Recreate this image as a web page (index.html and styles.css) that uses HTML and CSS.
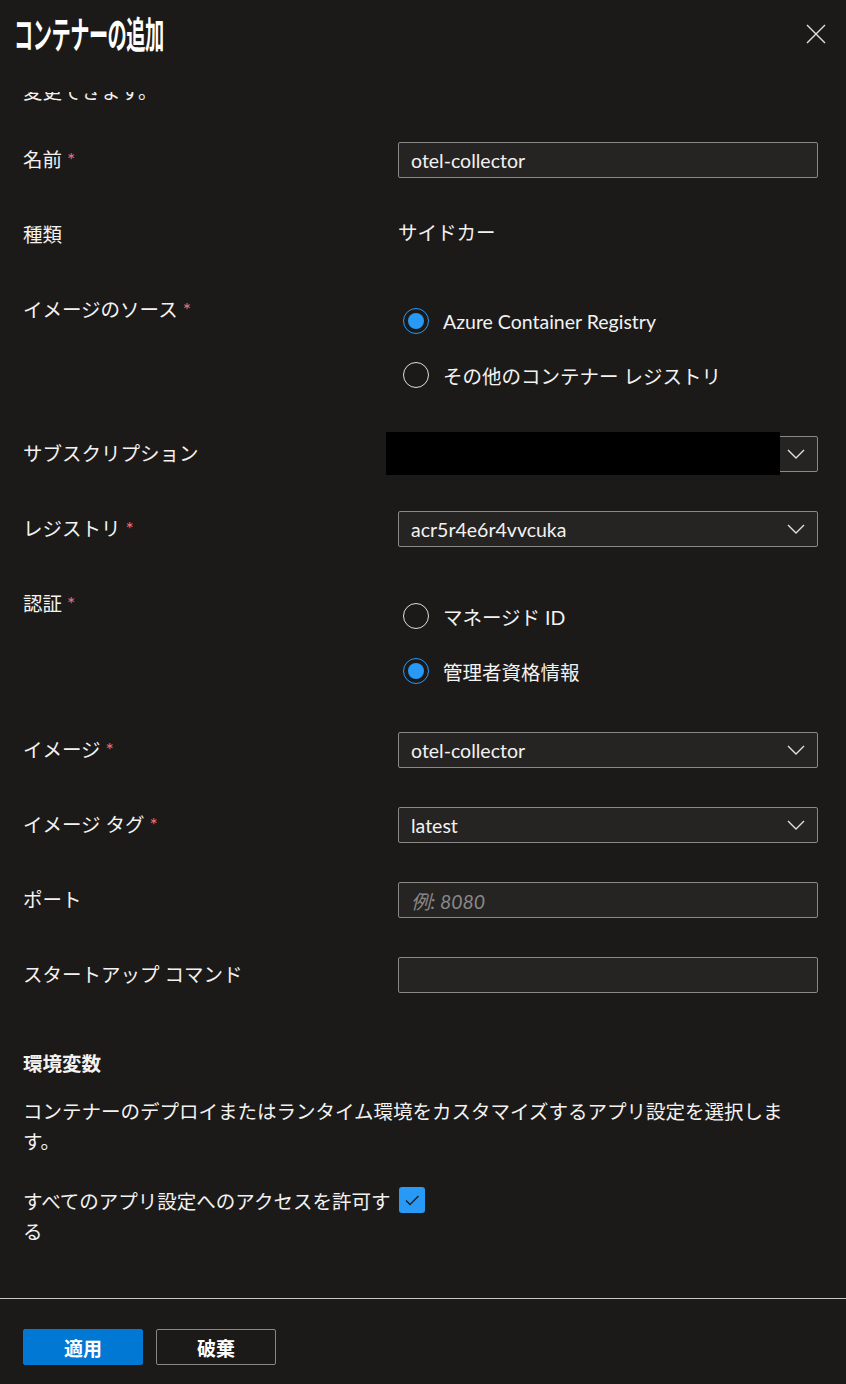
FILE: index.html
```html
<!DOCTYPE html>
<html lang="ja">
<head>
    <meta charset="UTF-8">
    <meta name="viewport" content="width=device-width, initial-scale=1.0">
    <title>コンテナーの追加</title>
    <link rel="stylesheet" href="styles.css">
</head>
<body>
    <div class="panel">
        <header class="panel-head">
            <h1 class="title">コンテナーの追加</h1>
            <button class="close" aria-label="閉じる">
                <svg width="20" height="20" viewBox="0 0 20 20"><path d="M1 1 L19 19 M19 1 L1 19" stroke="#e1dfdd" stroke-width="1.4" fill="none"/></svg>
            </button>
        </header>

        <main class="panel-body">
            <p class="intro">変更できます。</p>

            <div class="row">
                <label class="label">名前 <span class="req">*</span></label>
                <div class="field"><span class="value">otel-collector</span></div>
            </div>

            <div class="row">
                <label class="label">種類</label>
                <div class="plain">サイドカー</div>
            </div>

            <div class="row row-top">
                <label class="label">イメージのソース <span class="req">*</span></label>
                <div class="radios">
                    <div class="radio-item"><span class="radio checked"></span>Azure Container Registry</div>
                    <div class="radio-item"><span class="radio"></span>その他のコンテナー レジストリ</div>
                </div>
            </div>

            <div class="row">
                <label class="label">サブスクリプション</label>
                <div class="field dropdown redact-wrap">
                    <span class="value"></span>
                    <svg class="chev" width="18" height="10" viewBox="0 0 18 10"><path d="M1 1 L9 9 L17 1" stroke="#e1dfdd" stroke-width="1.4" fill="none"/></svg>
                    <div class="redacted"></div>
                </div>
            </div>

            <div class="row">
                <label class="label">レジストリ <span class="req">*</span></label>
                <div class="field dropdown">
                    <span class="value">acr5r4e6r4vvcuka</span>
                    <svg class="chev" width="18" height="10" viewBox="0 0 18 10"><path d="M1 1 L9 9 L17 1" stroke="#e1dfdd" stroke-width="1.4" fill="none"/></svg>
                </div>
            </div>

            <div class="row row-top">
                <label class="label">認証 <span class="req">*</span></label>
                <div class="radios auth">
                    <div class="radio-item"><span class="radio"></span>マネージド ID</div>
                    <div class="radio-item"><span class="radio checked"></span>管理者資格情報</div>
                </div>
            </div>

            <div class="row">
                <label class="label">イメージ <span class="req">*</span></label>
                <div class="field dropdown">
                    <span class="value">otel-collector</span>
                    <svg class="chev" width="18" height="10" viewBox="0 0 18 10"><path d="M1 1 L9 9 L17 1" stroke="#e1dfdd" stroke-width="1.4" fill="none"/></svg>
                </div>
            </div>

            <div class="row">
                <label class="label">イメージ タグ <span class="req">*</span></label>
                <div class="field dropdown">
                    <span class="value">latest</span>
                    <svg class="chev" width="18" height="10" viewBox="0 0 18 10"><path d="M1 1 L9 9 L17 1" stroke="#e1dfdd" stroke-width="1.4" fill="none"/></svg>
                </div>
            </div>

            <div class="row">
                <label class="label">ポート</label>
                <div class="field"><span class="placeholder">例: 8080</span></div>
            </div>

            <div class="row last">
                <label class="label">スタートアップ コマンド</label>
                <div class="field"></div>
            </div>

            <section class="env">
                <h2 class="env-title">環境変数</h2>
                <p class="env-desc">コンテナーのデプロイまたはランタイム環境をカスタマイズするアプリ設定を選択します。</p>
                <div class="row row-top check-row">
                    <label class="label wrap">すべてのアプリ設定へのアクセスを許可する</label>
                    <div>
                        <span class="checkbox">
                            <svg width="26" height="26" viewBox="0 0 26 26"><path d="M7 13.5 L11 17.5 L19.5 9" stroke="#1b1a19" stroke-width="1.3" fill="none"/></svg>
                        </span>
                    </div>
                </div>
            </section>
        </main>

        <footer class="panel-foot">
            <button class="btn primary">適用</button>
            <button class="btn">破棄</button>
        </footer>
    </div>
</body>
</html>
```

FILE: styles.css
```css
/* パネル全体 */
html, body {
    margin: 0;
    height: 100%;
}

body {
    background: #1b1a19;
    color: #f3f2f1;
    font-family: "Segoe UI", Lato, "Noto Sans CJK JP", sans-serif;
    font-size: 19.5px;
}

.panel {
    height: 100vh;
    display: flex;
    flex-direction: column;
}

.panel-head {
    height: 92px;
    flex: none;
    display: flex;
    justify-content: space-between;
    align-items: flex-start;
    padding: 0 20px 0 14px;
}

.title {
    margin: 12px 0 0;
    font-family: "Noto Sans CJK JP", sans-serif;
    font-size: 37px;
    font-weight: 700;
    line-height: 42px;
    letter-spacing: -1px;
    color: #ffffff;
    transform: scaleX(0.52);
    transform-origin: left center;
    white-space: nowrap;
}

.close {
    margin-top: 24px;
    background: none;
    border: none;
    padding: 0;
    cursor: pointer;
}

.panel-body {
    flex: 1;
    overflow: hidden;
    padding: 0 23px;
}

.intro {
    margin: -15px 0 35px;
    line-height: 30px;
}

/* フォーム行 */
.row {
    display: grid;
    grid-template-columns: 375px 420px;
    align-items: center;
    margin-bottom: 39px;
}

.row.row-top {
    align-items: start;
}

.row.last {
    margin-bottom: 0;
}

.label {
    line-height: 36px;
    white-space: nowrap;
}

.label.wrap {
    white-space: normal;
    line-height: 30px;
}

.req {
    color: #f1707b;
}

.field {
    position: relative;
    height: 36px;
    box-sizing: border-box;
    border: 1px solid #8a8886;
    border-radius: 2px;
    background: #252423;
    display: flex;
    align-items: center;
    padding: 0 12px;
}

.dropdown {
    justify-content: space-between;
}

.value {
    color: #f3f2f1;
}

.placeholder {
    color: #8a8886;
    font-style: italic;
}

.plain {
    line-height: 36px;
    margin-top: -4px;
}

.redacted {
    position: absolute;
    left: -13px;
    top: -5px;
    width: 394px;
    height: 43px;
    background: #000000;
}

/* ラジオボタン */
.radios {
    display: flex;
    flex-direction: column;
    gap: 18px;
    padding: 11px 0 4px 5px;
}

.radios.auth {
    gap: 19px;
    padding-top: 12px;
}

.radio-item {
    display: flex;
    align-items: center;
    gap: 14px;
    height: 36px;
}

.radio {
    width: 26px;
    height: 26px;
    box-sizing: border-box;
    border: 1.5px solid #e1dfdd;
    border-radius: 50%;
    display: flex;
    align-items: center;
    justify-content: center;
}

.radio.checked {
    border-color: #2899f5;
}

.radio.checked::after {
    content: "";
    width: 16px;
    height: 16px;
    border-radius: 50%;
    background: #2899f5;
}

/* 環境変数 */
.env {
    padding-top: 56px;
}

.env-title {
    margin: 0;
    font-size: 19.5px;
    font-weight: 700;
    line-height: 30px;
}

.env-desc {
    margin: 18px 0 30px;
    line-height: 30px;
    max-width: 780px;
}

.checkbox {
    display: block;
    width: 26px;
    height: 26px;
    margin-left: 1px;
    border-radius: 3px;
    background: #2899f5;
}

.checkbox svg {
    display: block;
}

/* フッター */
.panel-foot {
    flex: none;
    border-top: 1px solid #c8c6c4;
    padding: 30px 23px 19px;
    display: flex;
    gap: 13px;
}

.btn {
    width: 120px;
    height: 36px;
    box-sizing: border-box;
    border: 1px solid #8a8886;
    border-radius: 2px;
    background: transparent;
    color: #ffffff;
    font-family: "Noto Sans CJK JP", sans-serif;
    font-size: 19px;
    font-weight: 700;
    cursor: pointer;
}

.btn.primary {
    background: #0078d4;
    border-color: #0078d4;
}
```
